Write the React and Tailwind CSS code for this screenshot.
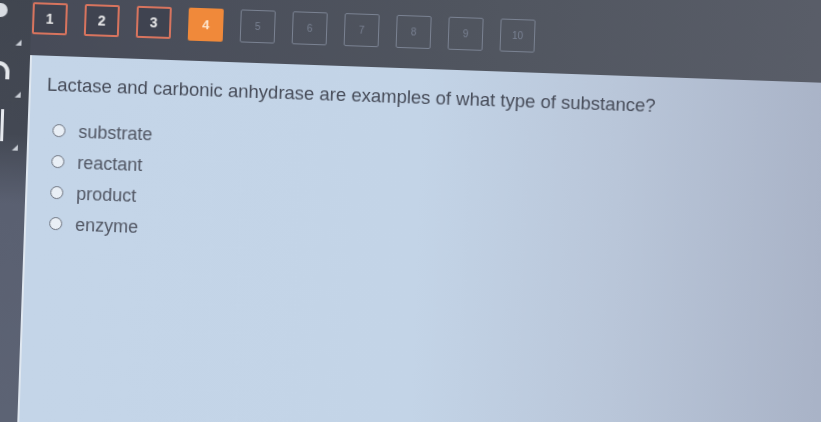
import React from "react";

const boxes = [1, 2, 3, 4, 5, 6, 7, 8, 9, 10];
const options = ["substrate", "reactant", "product", "enzyme"];

function Box({ n }) {
  if (n <= 3) {
    return (
      <div className="w-[35px] h-[32px] shrink-0 rounded-[2px] border-2 border-[#d8745e] bg-[#3f4350] flex items-center justify-center text-[14px] font-bold text-[#e9e9ea]">
        {n}
      </div>
    );
  }
  if (n === 4) {
    return (
      <div className="w-[35px] h-[33px] shrink-0 rounded-[2px] bg-[#f0893a] flex items-center justify-center text-[13px] font-bold text-[#fde6cf]">
        {n}
      </div>
    );
  }
  return (
    <div className="w-[35px] h-[33px] shrink-0 rounded-[2px] border-[1.5px] border-[#7a8292] flex items-center justify-center text-[10px] text-[#798192]">
      {n}
    </div>
  );
}

export default function App() {
  return (
    <div className="w-[821px] h-[422px] overflow-hidden bg-[#545966] font-['Liberation_Sans',Arial,sans-serif]">
      <div className="-mt-10 -ml-10 w-[940px] h-[540px] rotate-[2deg] origin-[40px_40px] flex blur-[0.4px]">
        <div className="w-[72px] shrink-0 bg-[linear-gradient(to_bottom,#40454f_0%,#434853_32%,#5a6071_45%,#5d6475_100%)] flex flex-col items-start pl-10 pt-10">
          <div className="w-[10px] h-[14px] mt-[3px] rounded-r-full bg-[#d9dde3] -ml-[2px]"></div>
          <div className="ml-[17px] mt-[22px] w-0 h-0 border-l-[6px] border-l-transparent border-b-[6px] border-b-[#c9ced6]"></div>
          <div className="w-[11px] h-[18px] mt-[16px] rounded-tr-full border-t-[4px] border-r-[4px] border-[#e3e6ea] ml-[1px]"></div>
          <div className="ml-[18px] mt-[12px] w-0 h-0 border-l-[6px] border-l-transparent border-b-[6px] border-b-[#c9ced6]"></div>
          <div className="w-[3px] h-[32px] mt-[12px] ml-[5px] bg-[#e6e9ee]"></div>
          <div className="ml-[17px] mt-[3px] w-0 h-0 border-l-[6px] border-l-transparent border-b-[6px] border-b-[#c9ced6]"></div>
        </div>
        <div className="flex-1 flex flex-col">
          <div className="h-[94px] shrink-0 pt-10 pl-[1px] bg-[linear-gradient(to_right,#474b58_0%,#50555f_50%,#5b5f6a_100%)] flex items-start gap-[17px]">
            {boxes.map((n) => (
              <div key={n} className="mt-[1px]">
                <Box n={n} />
              </div>
            ))}
          </div>
          <div className="flex-1 border-l-2 border-[#dfe7f0] pl-[16px] pt-[17px] bg-[linear-gradient(to_right,#c4d5e8_0%,#c3d4e7_45%,#b9c6d9_68%,#a9b3c7_92%)]">
            <div className="text-[18.5px] leading-[24px] text-[#474c59]">
              Lactase and carbonic anhydrase are examples of what type of substance?
            </div>
            <div className="mt-[18px] flex flex-col pl-[7px]">
              {options.map((o) => (
                <div key={o} className="h-[31px] flex items-center gap-[13px]">
                  <span className="w-[13px] h-[13px] shrink-0 rounded-full border-[1.5px] border-[#6c727e] bg-[#e9eff6]"></span>
                  <span className="text-[18px] leading-[24px] text-[#525764]">{o}</span>
                </div>
              ))}
            </div>
          </div>
        </div>
      </div>
    </div>
  );
}
